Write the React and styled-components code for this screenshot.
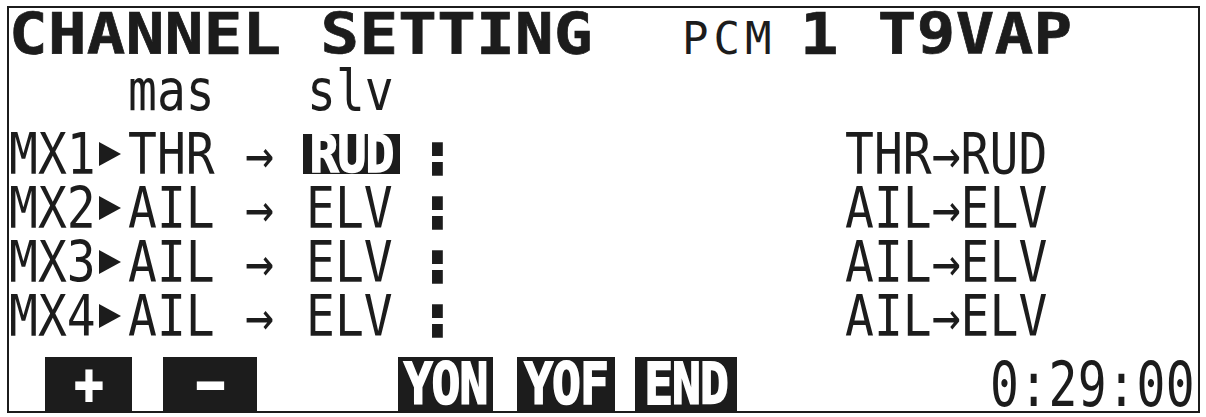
import React from "react";
import styled, { createGlobalStyle } from "styled-components";

const GlobalStyle = createGlobalStyle`
  html, body {
    margin: 0;
    padding: 0;
    background: #ffffff;
  }
  body {
    width: 1206px;
    height: 417px;
    overflow: hidden;
    font-family: "DejaVu Sans Mono", "Liberation Mono", monospace;
    color: #1c1c1c;
  }
`;

const INK = "#1c1c1c";

const Frame = styled.div`
  margin: 6px 0 0 7px;
  width: 1193px;
  height: 407px;
  box-sizing: border-box;
  border: 2px solid ${INK};
  display: flex;
  flex-direction: column;
  overflow: hidden;
`;

const TitleRow = styled.div`
  height: 52px;
  flex: none;
  display: flex;
  align-items: baseline;
  white-space: pre;
`;

const TitleText = styled.span`
  flex: none;
  display: inline-block;
  width: ${(p) => p.$w}px;
  font-family: "DejaVu Sans Mono", monospace;
  font-weight: 700;
  font-size: 64px;
  line-height: 48px;
  letter-spacing: 0.4px;
  transform: scaleY(0.9);
  transform-origin: 50% 100%;
  -webkit-text-stroke: 0.8px ${INK};
`;

const ModeText = styled.span`
  flex: none;
  width: ${(p) => p.$w}px;
  font-family: "DejaVu Sans Mono", monospace;
  font-size: 44px;
  line-height: 48px;
  letter-spacing: 5px;
`;

const HeaderRow = styled.div`
  height: 67px;
  flex: none;
  box-sizing: border-box;
  padding-bottom: 10px;
  display: flex;
  align-items: flex-end;
`;

const MixRow = styled.div`
  height: 54px;
  flex: none;
  display: flex;
  align-items: center;
`;

const Cell = styled.div`
  flex: none;
  width: ${(p) => p.$w}px;
  padding-left: ${(p) => p.$pad || 0}px;
  box-sizing: border-box;
  display: flex;
  align-items: center;
  margin-left: ${(p) => (p.$push ? "auto" : "0")};
`;

const Lcd = styled.span`
  display: inline-block;
  font-family: "DejaVu Sans Mono", monospace;
  font-size: 48px;
  line-height: 54px;
  white-space: pre;
  transform: scaleY(${(p) => p.$sy || 1.2});
  font-weight: ${(p) => (p.$bold ? 700 : 400)};
`;

const Selected = styled.span`
  display: inline-flex;
  align-items: center;
  justify-content: center;
  box-sizing: border-box;
  width: 97px;
  height: 40px;
  background: ${INK};
  border: 2px solid ${INK};
  color: #ffffff;
  font-family: "DejaVu Sans Mono", monospace;
  font-weight: 700;
  font-size: 48px;
  line-height: 40px;
  letter-spacing: -1px;
  -webkit-text-stroke: 1.5px #ffffff;
  span {
    display: inline-block;
    transform: scaleY(1.08);
  }
`;

const Colon = styled(Lcd)`
  font-weight: 700;
  -webkit-text-stroke: 3px ${INK};
`;

const FooterRow = styled.div`
  flex: 1;
  display: flex;
  align-items: flex-end;
`;

const SoftKey = styled.div`
  flex: none;
  width: ${(p) => p.$w}px;
  margin-left: ${(p) => p.$ml}px;
  height: 54px;
  background: ${INK};
  color: #ffffff;
  display: flex;
  align-items: center;
  justify-content: center;
  font-family: "DejaVu Sans Mono", monospace;
  font-weight: 700;
  font-size: 48px;
  line-height: 54px;
  letter-spacing: -1px;
  -webkit-text-stroke: 1.5px #ffffff;
  span {
    display: inline-block;
    transform: scaleY(1.2);
  }
`;

const Timer = styled(Lcd)`
  margin-left: auto;
  padding-right: 3px;
  letter-spacing: 0.4px;
`;

const Pointer = () => (
  <svg width="24" height="26" viewBox="0 0 24 26" style={{ marginLeft: 2 }}>
    <polygon points="1,1 23,13 1,25" fill={INK} />
  </svg>
);

const mixes = [
  { id: "MX1", mas: "THR", slv: "RUD", active: true },
  { id: "MX2", mas: "AIL", slv: "ELV" },
  { id: "MX3", mas: "AIL", slv: "ELV" },
  { id: "MX4", mas: "AIL", slv: "ELV" },
];

const keys = [
  { label: "+", w: 87, ml: 36 },
  { label: "\u2212", w: 94, ml: 31 },
  { label: "YON", w: 95, ml: 141 },
  { label: "YOF", w: 98, ml: 24 },
  { label: "END", w: 102, ml: 20 },
];

export default function App() {
  return (
    <>
      <GlobalStyle />
      <Frame>
        <TitleRow>
          <TitleText $w={673}>CHANNEL SETTING</TitleText>
          <ModeText $w={118}>PCM</ModeText>
          <TitleText $w={390}>1 T9VAP</TitleText>
        </TitleRow>

        <HeaderRow>
          <Cell $w={119} />
          <Cell $w={179}>
            <Lcd>mas</Lcd>
          </Cell>
          <Cell $w={150}>
            <Lcd>slv</Lcd>
          </Cell>
        </HeaderRow>

        {mixes.map((m) => (
          <MixRow key={m.id}>
            <Cell $w={87}>
              <Lcd>{m.id}</Lcd>
            </Cell>
            <Cell $w={32}>
              <Pointer />
            </Cell>
            <Cell $w={117}>
              <Lcd>{m.mas}</Lcd>
            </Cell>
            <Cell $w={58}>
              <Lcd>{"\u2192"}</Lcd>
            </Cell>
            <Cell $w={120} $pad={m.active ? 0 : 3}>
              {m.active ? (
                <Selected>
                  <span>{m.slv}</span>
                </Selected>
              ) : (
                <Lcd>{m.slv}</Lcd>
              )}
            </Cell>
            <Cell $w={30}>
              <Colon>:</Colon>
            </Cell>
            <Cell $w={353} $push>
              <Lcd>{`${m.mas}\u2192${m.slv}`}</Lcd>
            </Cell>
          </MixRow>
        ))}

        <FooterRow>
          {keys.map((k) => (
            <SoftKey key={k.label} $w={k.w} $ml={k.ml}>
              <span>{k.label}</span>
            </SoftKey>
          ))}
          <Timer $sy={1.28}>0:29:00</Timer>
        </FooterRow>
      </Frame>
    </>
  );
}
